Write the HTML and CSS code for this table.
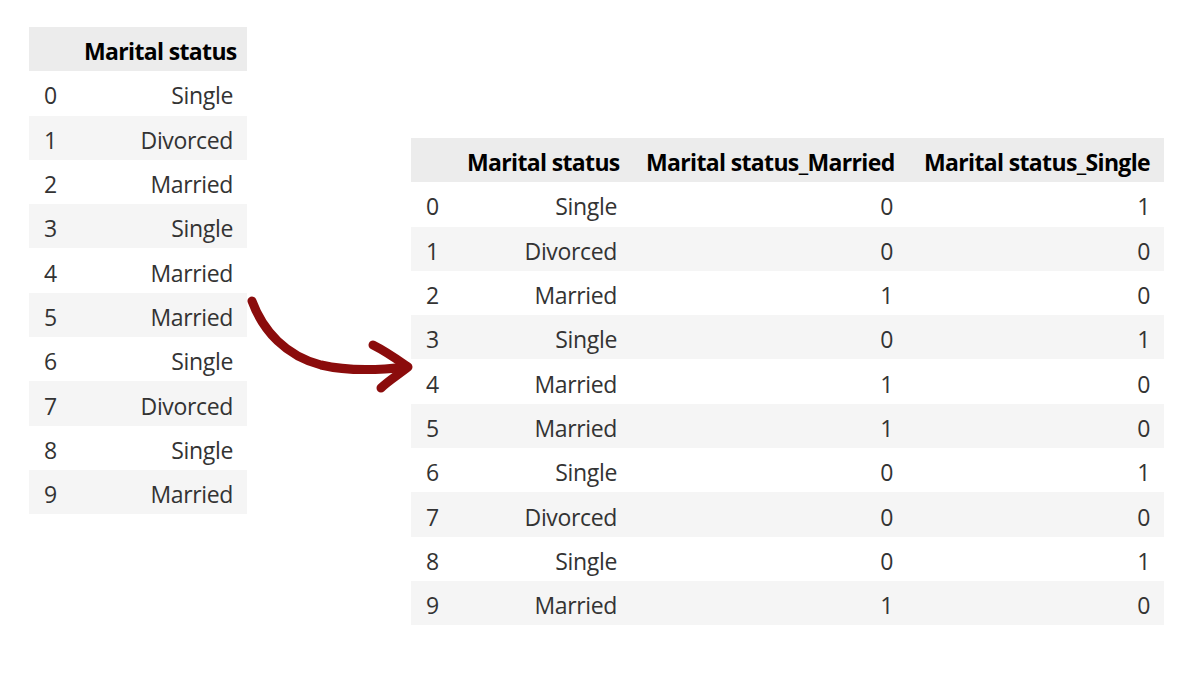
FILE: index.html
```html
<!DOCTYPE html>
<html>
<head>
<meta charset="utf-8">
<link rel="stylesheet" href="styles.css">
</head>
<body>
<div class="page">
  <table class="df df-left">
    <colgroup><col class="c-idx"><col class="c-ms"></colgroup>
    <thead><tr><th></th><th>Marital status</th></tr></thead>
    <tbody>
      <tr><td class="idx">0</td><td>Single</td></tr>
      <tr><td class="idx">1</td><td>Divorced</td></tr>
      <tr><td class="idx">2</td><td>Married</td></tr>
      <tr><td class="idx">3</td><td>Single</td></tr>
      <tr><td class="idx">4</td><td>Married</td></tr>
      <tr><td class="idx">5</td><td>Married</td></tr>
      <tr><td class="idx">6</td><td>Single</td></tr>
      <tr><td class="idx">7</td><td>Divorced</td></tr>
      <tr><td class="idx">8</td><td>Single</td></tr>
      <tr><td class="idx">9</td><td>Married</td></tr>
    </tbody>
  </table>

  <table class="df df-right">
    <colgroup><col class="c-idx2"><col class="c-ms2"><col class="c-mar"><col class="c-sin"></colgroup>
    <thead><tr><th></th><th>Marital status</th><th>Marital status_Married</th><th>Marital status_Single</th></tr></thead>
    <tbody>
      <tr><td class="idx">0</td><td>Single</td><td>0</td><td>1</td></tr>
      <tr><td class="idx">1</td><td>Divorced</td><td>0</td><td>0</td></tr>
      <tr><td class="idx">2</td><td>Married</td><td>1</td><td>0</td></tr>
      <tr><td class="idx">3</td><td>Single</td><td>0</td><td>1</td></tr>
      <tr><td class="idx">4</td><td>Married</td><td>1</td><td>0</td></tr>
      <tr><td class="idx">5</td><td>Married</td><td>1</td><td>0</td></tr>
      <tr><td class="idx">6</td><td>Single</td><td>0</td><td>1</td></tr>
      <tr><td class="idx">7</td><td>Divorced</td><td>0</td><td>0</td></tr>
      <tr><td class="idx">8</td><td>Single</td><td>0</td><td>1</td></tr>
      <tr><td class="idx">9</td><td>Married</td><td>1</td><td>0</td></tr>
    </tbody>
  </table>

  <svg class="arrow" width="200" height="120" viewBox="240 280 200 120" xmlns="http://www.w3.org/2000/svg">
    <path d="M252 301 C 263 331, 286 356, 321 365 C 351 372, 381 370, 406 367" fill="none" stroke="#8b0c0c" stroke-width="9" stroke-linecap="round"/>
    <path d="M373 345 C 387 352, 398 360, 408 367 C 398 375, 388 381, 381 388" fill="none" stroke="#8b0c0c" stroke-width="9" stroke-linecap="round" stroke-linejoin="round"/>
  </svg>
</div>
</body>
</html>
```

FILE: styles.css
```css
html, body {
  margin: 0;
  padding: 0;
  background: #ffffff;
}

.page {
  position: relative;
  width: 1200px;
  height: 675px;
  display: flex;
  align-items: flex-start;
  font-family: "Open Sans", "Noto Sans", sans-serif;
}

.df {
  border-collapse: collapse;
  table-layout: fixed;
  font-size: 23px;
  color: #333333;
}

.df th,
.df td {
  height: 44.3px;
  padding: 4px 14px 0 15px;
  text-align: right;
  vertical-align: middle;
  white-space: nowrap;
  box-sizing: border-box;
  letter-spacing: -0.35px;
}

.df th {
  background: #ececec;
  color: #000000;
  font-weight: 700;
  letter-spacing: -0.65px;
}

.df td.idx {
  text-align: left;
}

.df tbody tr:nth-child(even) td {
  background: #f5f5f5;
}

.df-left {
  margin: 27px 0 0 29px;
  width: 218px;
}

.c-idx { width: 40px; }
.c-ms { width: 178px; }

.df-right {
  margin: 138px 0 0 164px;
  width: 753px;
}

.c-idx2 { width: 41px; }
.c-ms2 { width: 179px; }
.c-mar { width: 276px; }
.c-sin { width: 257px; }

.arrow {
  position: absolute;
  left: 240px;
  top: 280px;
}
```
